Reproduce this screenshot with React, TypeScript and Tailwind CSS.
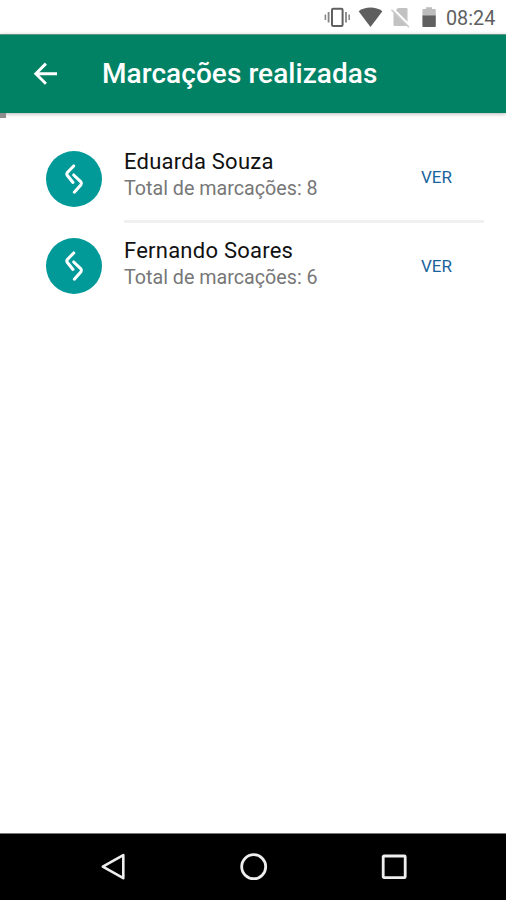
type Person = { name: string; total: number }

const PEOPLE: Person[] = [
  { name: 'Eduarda Souza', total: 8 },
  { name: 'Fernando Soares', total: 6 },
]

function StatusBar() {
  return (
    <div className="flex h-[34px] shrink-0 items-center justify-end bg-white pr-[11px] text-[#5f5f5f]">
      <svg className="mr-[7px] h-[34px] w-[28px]" viewBox="323 0 28 34" fill="none" stroke="currentColor">
        <rect x="332" y="8.7" width="10.6" height="17.2" rx="1.2" strokeWidth="2" />
        <path d="M328.6 12v10.5M346 12v10.5" strokeWidth="1.8" stroke="#858585" />
        <path d="M325.4 14.5v5.5M349.2 14.5v5.5" strokeWidth="1.6" stroke="#8a8a8a" />
      </svg>
      <svg className="mr-[8px] h-[34px] w-[25px]" viewBox="358 0 25 34" fill="currentColor">
        <path d="M370.5 27 358.6 11.2C362 8.6 366 7.4 370.5 7.4S379 8.6 382.4 11.2Z" />
      </svg>
      <svg className="mr-[11px] h-[34px] w-[20px]" viewBox="391.5 0 20 34">
        <path d="M398.5 8H407a1 1 0 0 1 1 1V25a1 1 0 0 1-1 1H395a1 1 0 0 1-1-1V12.5Z" fill="#c2c2c2" />
        <path d="M393 8.3 411 26.3" stroke="white" strokeWidth="2.2" />
        <path d="M392 9.8 409.5 27.3" stroke="#cacaca" strokeWidth="1.6" />
      </svg>
      <svg className="mr-[9px] h-[34px] w-[15px]" viewBox="422 0 15 34">
        <path d="M422.4 16V10a1 1 0 0 1 1-1H426V7.2h6V9h2.8a1 1 0 0 1 1 1v6Z" fill="#bdbdbd" />
        <path d="M422.4 15.5h13.4V26a1 1 0 0 1-1 1H423.4a1 1 0 0 1-1-1Z" fill="#606060" />
      </svg>
      <span className="w-[49px] whitespace-nowrap pt-[4px] text-[19.8px] leading-6">08:24</span>
    </div>
  )
}

function Header() {
  return (
    <header className="z-10 flex h-[79px] shrink-0 items-center border-t border-[#5d9784] bg-[#028265] pl-[33px] text-white shadow-[0_1px_4px_rgba(0,0,0,0.3)]">
      <svg className="h-[26px] w-[26px]" viewBox="0 0 26 26" fill="none" stroke="currentColor" strokeWidth="2.9">
        <path d="M24 12.7H3M12.9 2.6 2.8 12.7l10.1 10.1" />
      </svg>
      <h1 className="ml-[43px] whitespace-nowrap text-[28px] font-medium leading-8 tracking-[0.06px]">Marcações realizadas</h1>
    </header>
  )
}

function Avatar() {
  return (
    <div className="flex h-14 w-14 shrink-0 items-center justify-center rounded-full bg-[#029999]">
      <svg className="h-8 w-6" viewBox="0 0 24 32" fill="none" stroke="white" strokeWidth="3.1" strokeLinecap="round" strokeLinejoin="round">
        <path d="M11.7 3 5.4 9.5Q4.4 10.9 5.2 12.3L11 19.4" />
        <path d="M11.7 12 18.9 18.9Q20 20.3 19 21.7L12.3 29.2" />
      </svg>
    </div>
  )
}

function PersonRow({ name, total }: Person) {
  return (
    <li className="group flex h-[87px] pl-[46px] pr-[22px]">
      <div className="pt-[15px]">
        <Avatar />
      </div>
      <div className="ml-[22px] mt-px flex flex-1 items-start justify-between border-b-[3px] border-[#f0f0f0] pr-[32px] pt-[12px] group-last:border-transparent group-last:pt-[14px]">
        <div className="whitespace-nowrap">
          <p className="text-[22px] leading-[26px] tracking-[0.24px] text-[#111]">{name}</p>
          <p className="text-[19.7px] leading-[27px] text-[#777]">Total de marcações: {total}</p>
        </div>
        <button className="mt-[18px] text-[17px] leading-5 text-[#18639c]">VER</button>
      </div>
    </li>
  )
}

function NavBar() {
  return (
    <nav className="flex h-[67px] shrink-0 items-center justify-between border-t border-[#777] bg-black px-[97px]">
      <svg className="h-8 w-8" viewBox="0 0 32 32" fill="none" stroke="#eee" strokeWidth="2.6" strokeLinejoin="round">
        <path d="M5.8 15.7 26.3 4.2v23Z" />
      </svg>
      <svg className="h-8 w-8" viewBox="0 0 32 32" fill="none" stroke="#eee" strokeWidth="2.8">
        <circle cx="16.7" cy="15.7" r="12" />
      </svg>
      <svg className="h-8 w-8" viewBox="0 0 32 32" fill="none" stroke="#eee" strokeWidth="2.8">
        <rect x="6.2" y="5" width="22" height="21.6" rx="0.8" />
      </svg>
    </nav>
  )
}

export default function App() {
  return (
    <div className="flex h-[900px] w-[506px] flex-col overflow-hidden bg-white font-['Roboto',sans-serif]">
      <StatusBar />
      <Header />
      <main className="flex-1">
        <div className="relative z-20 h-[5px] w-[6px] bg-[#8d8d8d]" />
        <ul className="pt-[18px]">
          {PEOPLE.map((p) => (
            <PersonRow key={p.name} {...p} />
          ))}
        </ul>
      </main>
      <NavBar />
    </div>
  )
}
